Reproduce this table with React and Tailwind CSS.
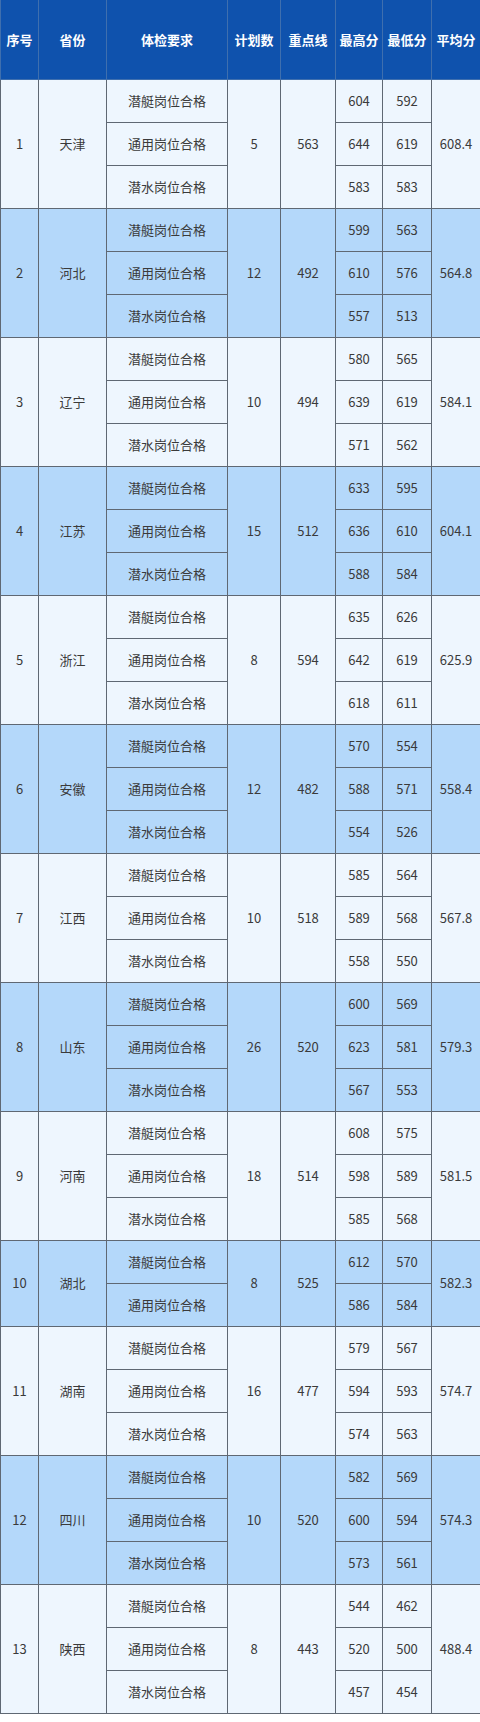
const data = [
  { no: 1, prov: "天津", plan: 5, line: 563, avg: "608.4", rows: [["潜艇岗位合格", 604, 592], ["通用岗位合格", 644, 619], ["潜水岗位合格", 583, 583]] },
  { no: 2, prov: "河北", plan: 12, line: 492, avg: "564.8", rows: [["潜艇岗位合格", 599, 563], ["通用岗位合格", 610, 576], ["潜水岗位合格", 557, 513]] },
  { no: 3, prov: "辽宁", plan: 10, line: 494, avg: "584.1", rows: [["潜艇岗位合格", 580, 565], ["通用岗位合格", 639, 619], ["潜水岗位合格", 571, 562]] },
  { no: 4, prov: "江苏", plan: 15, line: 512, avg: "604.1", rows: [["潜艇岗位合格", 633, 595], ["通用岗位合格", 636, 610], ["潜水岗位合格", 588, 584]] },
  { no: 5, prov: "浙江", plan: 8, line: 594, avg: "625.9", rows: [["潜艇岗位合格", 635, 626], ["通用岗位合格", 642, 619], ["潜水岗位合格", 618, 611]] },
  { no: 6, prov: "安徽", plan: 12, line: 482, avg: "558.4", rows: [["潜艇岗位合格", 570, 554], ["通用岗位合格", 588, 571], ["潜水岗位合格", 554, 526]] },
  { no: 7, prov: "江西", plan: 10, line: 518, avg: "567.8", rows: [["潜艇岗位合格", 585, 564], ["通用岗位合格", 589, 568], ["潜水岗位合格", 558, 550]] },
  { no: 8, prov: "山东", plan: 26, line: 520, avg: "579.3", rows: [["潜艇岗位合格", 600, 569], ["通用岗位合格", 623, 581], ["潜水岗位合格", 567, 553]] },
  { no: 9, prov: "河南", plan: 18, line: 514, avg: "581.5", rows: [["潜艇岗位合格", 608, 575], ["通用岗位合格", 598, 589], ["潜水岗位合格", 585, 568]] },
  { no: 10, prov: "湖北", plan: 8, line: 525, avg: "582.3", rows: [["潜艇岗位合格", 612, 570], ["通用岗位合格", 586, 584]] },
  { no: 11, prov: "湖南", plan: 16, line: 477, avg: "574.7", rows: [["潜艇岗位合格", 579, 567], ["通用岗位合格", 594, 593], ["潜水岗位合格", 574, 563]] },
  { no: 12, prov: "四川", plan: 10, line: 520, avg: "574.3", rows: [["潜艇岗位合格", 582, 569], ["通用岗位合格", 600, 594], ["潜水岗位合格", 573, 561]] },
  { no: 13, prov: "陕西", plan: 8, line: 443, avg: "488.4", rows: [["潜艇岗位合格", 544, 462], ["通用岗位合格", 520, 500], ["潜水岗位合格", 457, 454]] },
];

const headers = ["序号", "省份", "体检要求", "计划数", "重点线", "最高分", "最低分", "平均分"];
const widths = ["w-[38px]", "w-[68px]", "w-[121px]", "w-[53px]", "w-[55px]", "w-[47px]", "w-[49px]", "w-[49px]"];

const cell = "border-[1.5px] border-[#5f6873] text-center align-middle p-0";

function App() {
  return (
    <div className="w-[480px] bg-white pb-[5px] font-['Noto_Sans_CJK_SC','Noto_Sans',sans-serif] text-[13px] text-[#3a3a3a]">
      <table className="w-[480px] table-fixed border-collapse">
        <colgroup>
          {widths.map((w, i) => (
            <col key={i} className={w} />
          ))}
        </colgroup>
        <thead>
          <tr className="h-[79px] bg-[#0f52ad]">
            {headers.map((h) => (
              <th key={h} className="border-[1.5px] border-[#3f6fae] border-t-0 p-0 text-center align-middle text-[13px] font-bold text-white">
                {h}
              </th>
            ))}
          </tr>
        </thead>
        <tbody>
          {data.map((b) => {
            const bg = b.no % 2 === 0 ? "bg-[#b4d8fa]" : "bg-[#eef6fe]";
            const n = b.rows.length;
            return b.rows.map((r, i) => (
              <tr key={b.no + "-" + i} className={"h-[43px] " + bg}>
                {i === 0 && (
                  <>
                    <td rowSpan={n} className={cell}>{b.no}</td>
                    <td rowSpan={n} className={cell}>{b.prov}</td>
                  </>
                )}
                <td className={cell}>{r[0]}</td>
                {i === 0 && (
                  <>
                    <td rowSpan={n} className={cell}>{b.plan}</td>
                    <td rowSpan={n} className={cell}>{b.line}</td>
                  </>
                )}
                <td className={cell}>{r[1]}</td>
                <td className={cell}>{r[2]}</td>
                {i === 0 && (
                  <td rowSpan={n} className={cell}>{b.avg}</td>
                )}
              </tr>
            ));
          })}
        </tbody>
      </table>
    </div>
  );
}

export default App;
